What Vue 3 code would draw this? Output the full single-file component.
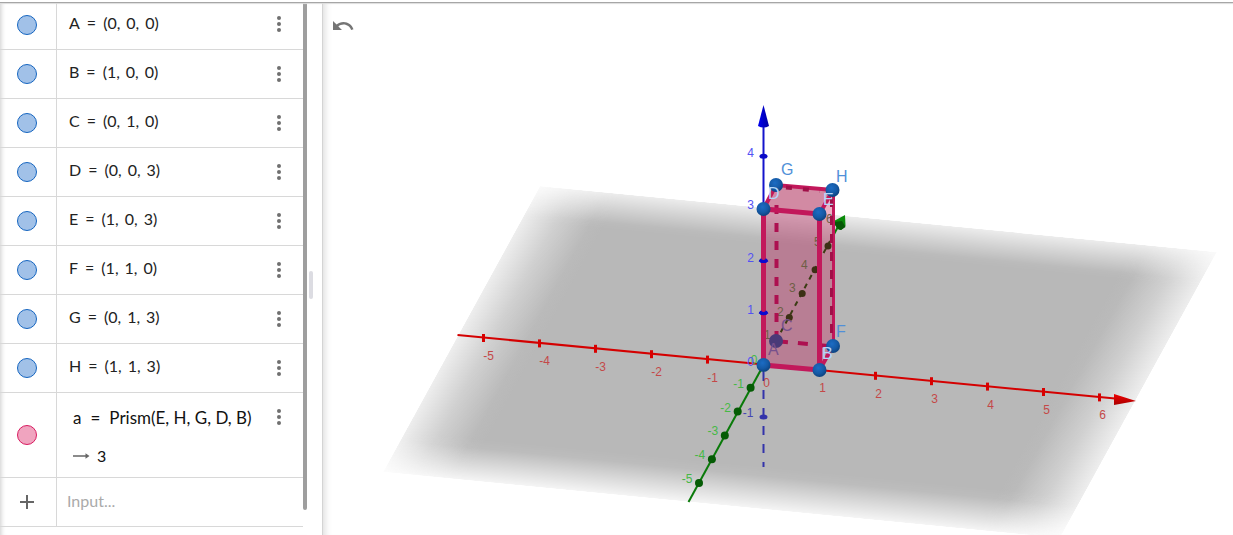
<script setup>
import { ref } from 'vue'

const points = [
  { name: 'A', value: ['(0,', '0,', '0)'] },
  { name: 'B', value: ['(1,', '0,', '0)'] },
  { name: 'C', value: ['(0,', '1,', '0)'] },
  { name: 'D', value: ['(0,', '0,', '3)'] },
  { name: 'E', value: ['(1,', '0,', '3)'] },
  { name: 'F', value: ['(1,', '1,', '0)'] },
  { name: 'G', value: ['(0,', '1,', '3)'] },
  { name: 'H', value: ['(1,', '1,', '3)'] },
]
const entry = ref('')

// Parallel projection of the scene onto the canvas.
const project = (x, y, z = 0) => [763.5 + 56 * x + 12.9 * y, 365 + 5.4 * x - 23.8 * y - 52.2 * z]

const xTicks = [-5, -4, -3, -2, -1, 2, 3, 4, 5, 6].map((n) => ({ n, p: project(n, 0) }))
const xLabels = [-5, -4, -3, -2, -1, 0, 1, 2, 3, 4, 5, 6].map((n) => ({ n, p: project(n, 0) }))
const yBack = [2, 3, 4, 5].map((n) => ({ n, p: project(0, n) }))
const yFront = [-1, -2, -3, -4, -5].map((n) => ({ n, p: project(0, n) }))
const zTicks = [1, 2, 4].map((n) => ({ n, p: project(0, 0, n) }))
const zLabels = [0, 1, 2, 3, 4].map((n) => ({ n, p: project(0, 0, n) }))
</script>

<template>
  <main class="app">
    <section class="algebra" aria-label="Algebra">
      <ul class="rows">
        <li v-for="p in points" :key="p.name" class="row">
          <div class="marble-cell">
            <button class="marble" :aria-label="'Show or hide ' + p.name"></button>
          </div>
          <div class="definition">
            <span>{{ p.name }}</span><span class="equals">=</span>
            <span v-for="(part, i) in p.value" :key="i" class="part">{{ part }}</span>
          </div>
          <button class="more" :aria-label="'Options for ' + p.name"><i></i><i></i><i></i></button>
        </li>
        <li class="row prism">
          <div class="marble-cell">
            <button class="marble pink" aria-label="Show or hide a"></button>
          </div>
          <div class="command">
            <div class="formula"><span>a</span><span>=</span><span>Prism(E, H, G, D, B)</span></div>
            <div class="result">
              <svg width="17" height="8" viewBox="0 0 17 8" aria-hidden="true">
                <path d="M0 3.200h12.500V1.200L16.500 4l-4 2.800V4.800H0z" fill="#666" />
              </svg>
              <span>3</span>
            </div>
          </div>
          <button class="more" aria-label="Options for a"><i></i><i></i><i></i></button>
        </li>
        <li class="row">
          <div class="marble-cell">
            <button class="plus" aria-label="Add">
              <svg width="14" height="14" viewBox="0 0 14 14"><path d="M7 0v14M0 7h14" stroke="#666" stroke-width="2" /></svg>
            </button>
          </div>
          <input v-model="entry" class="entry" type="text" placeholder="Input..." aria-label="Input" />
        </li>
      </ul>
      <div class="scrollbar"></div>
    </section>
    <div class="splitter"><span class="grip"></span></div>
    <section class="graphics" aria-label="3D Graphics">
      <svg class="scene" viewBox="322 0 911 535" preserveAspectRatio="xMidYMid slice">
        <defs>
          <linearGradient id="fadeU" x1="0" y1="0" x2="1" y2="0">
            <stop offset="0" stop-color="#b8b8b8" stop-opacity="0.24" />
            <stop offset="0.05" stop-color="#b8b8b8" stop-opacity="0.66" />
            <stop offset="0.1" stop-color="#b8b8b8" stop-opacity="0.97" />
            <stop offset="0.12" stop-color="#b8b8b8" />
            <stop offset="0.88" stop-color="#b8b8b8" />
            <stop offset="0.9" stop-color="#b8b8b8" stop-opacity="0.97" />
            <stop offset="0.95" stop-color="#b8b8b8" stop-opacity="0.66" />
            <stop offset="1" stop-color="#b8b8b8" stop-opacity="0.24" />
          </linearGradient>
          <linearGradient id="fadeV" x1="0" y1="0" x2="0" y2="1">
            <stop offset="0" stop-color="#fff" stop-opacity="0.26" />
            <stop offset="0.05" stop-color="#fff" stop-opacity="0.62" />
            <stop offset="0.1" stop-color="#fff" stop-opacity="0.96" />
            <stop offset="0.12" stop-color="#fff" />
            <stop offset="0.86" stop-color="#fff" />
            <stop offset="0.89" stop-color="#fff" stop-opacity="0.94" />
            <stop offset="0.95" stop-color="#fff" stop-opacity="0.5" />
            <stop offset="1" stop-color="#fff" stop-opacity="0.14" />
          </linearGradient>
          <mask id="planeMask" maskUnits="userSpaceOnUse" x="0" y="0" width="1" height="1">
            <rect width="1" height="1" fill="url(#fadeV)" />
          </mask>
          <radialGradient id="ball" cx="0.42" cy="0.35" r="0.65">
            <stop offset="0" stop-color="#1c6cc4" />
            <stop offset="0.6" stop-color="#155aa6" />
            <stop offset="1" stop-color="#0d4380" />
          </radialGradient>
          <linearGradient id="coneX" x1="0" y1="0" x2="0" y2="1">
            <stop offset="0" stop-color="#f00000" />
            <stop offset="1" stop-color="#a80000" />
          </linearGradient>
          <linearGradient id="coneZ" x1="0" y1="0" x2="1" y2="0">
            <stop offset="0" stop-color="#0000f0" />
            <stop offset="1" stop-color="#0000a0" />
          </linearGradient>
        </defs>

        <g transform="matrix(677 66 -157 286 540 186)">
          <rect width="1" height="1" fill="url(#fadeU)" mask="url(#planeMask)" />
        </g>

        <!-- y axis behind the solid -->
        <path d="M833 236L840 223" stroke="#0a7a0a" stroke-width="2" />
        <path d="M834 221L845 215L845.500 226L841 230Q836 230 834 221Z" fill="#0a8a0a" />
        <path d="M834 222L842 221L845.500 227L841 230Q836 229 834 222Z" fill="#065806" />

        <!-- x axis -->
        <path d="M457.500 335L1115 398.500" stroke="#d40000" stroke-width="2" />
        <path v-for="t in xTicks" :key="t.n" :d="`M${t.p[0]} ${t.p[1] - 4}v8`" stroke="#d80000" stroke-width="3" />
        <path d="M1114 394L1136 401L1114 405Z" fill="url(#coneX)" />

        <!-- z axis -->
        <path d="M763.500 368V467" class="z-hidden" />
        <ellipse cx="763.500" cy="417" rx="4" ry="2.500" fill="#3333aa" />
        <path d="M763.500 210V122" stroke="#1414cc" stroke-width="2" />
        <path d="M763.500 105L769 126Q763.500 129 758 126Z" fill="url(#coneZ)" />

        <!-- faces of the solid -->
        <path d="M763.500 209L819.500 214V370L763.500 365Z" fill="#b81f59" fill-opacity="0.38" />
        <path d="M819.500 214L833 190V346L819.500 370Z" fill="#c8285f" fill-opacity="0.36" />
        <path d="M763.500 209L776 185L833 190L819.500 214Z" fill="#cc7a96" fill-opacity="0.88" />

        <!-- y axis inside the solid -->
        <path d="M776 341L830 241" stroke="#3c3c14" stroke-width="2" stroke-dasharray="5 5" />
        <circle v-for="t in yBack" :key="t.n" :cx="t.p[0]" :cy="t.p[1]" r="3.500" fill="#3c3014" />
        <g class="tick-label olive">
          <text x="764" y="339">1</text>
          <text x="777" y="316">2</text>
          <text x="789" y="292">3</text>
          <text x="801" y="269">4</text>
          <text x="814" y="246">5</text>
          <text x="826" y="223">6</text>
        </g>

        <!-- hidden edges and points -->
        <g class="hidden-edges">
          <path d="M776.500 205V341" stroke-dasharray="9 9" />
          <path d="M776 341L833 346.500" stroke-dasharray="10 10" stroke-dashoffset="-2" />
        </g>
        <circle cx="776" cy="341" r="7" fill="#4a3a78" />
        <g class="scene-label violet">
          <text x="781" y="331">C</text>
          <text x="768" y="355">A</text>
        </g>

        <!-- visible edges -->
        <path d="M833.500 190V346" class="edge thin" />
        <path d="M831.500 198V340" class="hidden-side" />
        <path d="M819.500 370L833 346" class="edge" />
        <path d="M763.500 209L776 185L833 190" class="edge" />
        <path d="M819.500 214L833 190" class="edge" />
        <path d="M786 187.500L820 191" stroke="#a01048" stroke-width="4" stroke-dasharray="6 11" />
        <circle cx="776" cy="185" r="7" fill="url(#ball)" />
        <circle cx="832.500" cy="190" r="7" fill="url(#ball)" />
        <circle cx="833" cy="346" r="7" fill="url(#ball)" />
        <path d="M763.500 209V365L819.500 370V214Z" class="edge strong" />
        <ellipse v-for="t in zTicks" :key="t.n" :cx="t.p[0]" :cy="t.p[1]" rx="4" ry="2.500" fill="#0a0ac8" />
        <path d="M763.500 255V261M763.500 307V313" stroke="#c2185b" stroke-width="4" />
        <path d="M759.500 260q4 3 8 0M759.500 312q4 3 8 0" stroke="#0a0ad0" stroke-width="3" fill="none" />

        <!-- y axis in front of the solid -->
        <path d="M763.500 365L688.500 502" stroke="#0a7a0a" stroke-width="2" />
        <circle v-for="t in yFront" :key="t.n" :cx="t.p[0]" :cy="t.p[1] - 1" r="4" fill="#055c05" />
        <circle cx="763.500" cy="209" r="7" fill="url(#ball)" />
        <circle cx="819.500" cy="214" r="7" fill="url(#ball)" />
        <circle cx="763.500" cy="365" r="7" fill="url(#ball)" />
        <circle cx="819.500" cy="370" r="7" fill="url(#ball)" />

        <g class="tick-label red">
          <text v-for="t in xLabels" :key="t.n" :x="t.p[0] + (t.n < 0 ? 5 : 3)" :y="t.p[1] + 22">{{ t.n }}</text>
        </g>
        <g class="tick-label green">
          <text v-for="t in yFront" :key="t.n" :x="t.p[0] - 12" :y="t.p[1] - 1">{{ t.n }}</text>
          <text x="754" y="364">0</text>
        </g>
        <g class="tick-label blue">
          <text v-for="t in zLabels" :key="t.n" :x="t.p[0] - 13" :y="t.p[1] + 1">{{ t.n }}</text>
          <text x="748" y="417" class="dim">-1</text>
        </g>
        <g class="scene-label">
          <text x="781" y="175">G</text>
          <text x="836" y="182">H</text>
          <text x="836" y="337">F</text>
          <g class="pale">
            <text x="768" y="199">D</text>
            <text x="823" y="205">E</text>
            <text x="822" y="359">B</text>
          </g>
        </g>
      </svg>
      <button class="undo" aria-label="Undo">
        <svg width="21" height="10" viewBox="2 7 21 10">
          <path d="M12.500 8c-2.650 0-5.050.99-6.900 2.600L2 7v9h9l-3.620-3.620c1.390-1.160 3.160-1.880 5.120-1.880 3.540 0 6.550 2.310 7.600 5.500l2.370-.78C21.080 11.030 17.150 8 12.500 8z" fill="#757575" />
        </svg>
      </button>
    </section>
  </main>
</template>

<style>
body {
  margin: 0;
  background: #fff;
}
</style>

<style scoped>
.app {
  display: flex;
  height: 100vh;
  overflow: hidden;
  position: relative;
  background: #fff;
  font-family: Lato, "Liberation Sans", sans-serif;
}
.app::before {
  content: "";
  position: absolute;
  inset: 0 0 auto 0;
  height: 2px;
  border-bottom: 1px solid #a6a6a6;
  background: #fff;
  box-shadow: 0 1px 1px #ddd;
  z-index: 2;
}
button {
  border: 0;
  padding: 0;
  background: none;
  cursor: pointer;
}
.algebra {
  flex: 0 0 307px;
  display: flex;
  position: relative;
  box-shadow: inset 5px 0 5px -4px #ccc;
}
.rows {
  flex: 1;
  list-style: none;
  margin: 0;
  padding: 0;
}
.row {
  display: flex;
  height: 49px;
  box-shadow: inset 0 -1px #d8d8d8;
}
.row:first-child {
  height: 50px;
}
.marble-cell {
  width: 57px;
  border-right: 1px solid #d8d8d8;
  display: flex;
  align-items: center;
  justify-content: center;
  padding: 0 2px 1px 0;
  box-sizing: border-box;
}
.marble {
  width: 20px;
  height: 20px;
  border-radius: 50%;
  box-sizing: border-box;
  border: 1px solid #1565c0;
  background: #a1c1e8;
}
.marble.pink {
  border-color: #d81b60;
  background: #f0a4bf;
}
.definition {
  flex: 1;
  display: flex;
  padding-left: 12px;
  font-size: 16px;
  line-height: 44px;
  color: #222;
  white-space: nowrap;
}
.row:first-child .definition {
  line-height: 46px;
}
.equals {
  padding: 0 7px;
}
.part + .part {
  padding-left: 6px;
}
.more {
  width: 48px;
  height: 48px;
  display: flex;
  flex-direction: column;
  align-items: center;
  justify-content: center;
  gap: 2px;
}
.more i {
  width: 4px;
  height: 4px;
  border-radius: 50%;
  background: #707070;
}
.row.prism {
  height: 85px;
}
.command {
  flex: 1;
  padding: 6px 0 0 16px;
  font-size: 16px;
  line-height: 38px;
  color: #111;
  white-space: nowrap;
}
.formula {
  display: flex;
  gap: 9px;
  font-size: 17px;
}
.result {
  display: flex;
  align-items: center;
  gap: 7px;
}
.plus {
  display: flex;
}
.entry {
  flex: 1;
  min-width: 0;
  border: 0;
  outline: 0;
  background: none;
  padding: 0 0 4px 10px;
  font: 16px Lato, "Liberation Sans", sans-serif;
}
.entry::placeholder {
  color: #aaa;
}
.scrollbar {
  width: 4px;
  height: 510px;
  background: #9e9e9e;
  border-radius: 0 0 2px 2px;
}
.splitter {
  flex: 0 0 15px;
  display: flex;
  align-items: center;
  padding-top: 35px;
  box-sizing: border-box;
}
.grip {
  width: 4px;
  height: 28px;
  margin-left: 2px;
  border-radius: 2px;
  background: #dcdce2;
}
.graphics {
  flex: 1;
  min-width: 0;
  position: relative;
  box-shadow: inset 1px 0 #d4d4d4, inset 9px 0 7px -6px #ddd;
}
.scene {
  display: block;
  width: 100%;
  height: 100%;
}
.undo {
  position: absolute;
  left: 11px;
  top: 21px;
  display: flex;
}
.z-hidden {
  stroke: #3333aa;
  stroke-width: 2;
  stroke-dasharray: 9 9;
  stroke-dashoffset: -4;
}
.hidden-edges {
  stroke: #ad1050;
  stroke-width: 4;
}
.hidden-side {
  stroke: #a01048;
  stroke-width: 3;
  stroke-dasharray: 9 9;
}
.edge {
  fill: none;
  stroke: #c2185b;
  stroke-width: 4;
}
.thin {
  stroke-width: 3;
}
.strong {
  stroke-width: 5;
}
.tick-label {
  font: 12px "Liberation Sans", sans-serif;
  text-anchor: middle;
}
.olive {
  fill: #6e5f45;
  text-anchor: start;
}
.red {
  fill: #c44848;
}
.green {
  fill: #46b846;
}
.blue {
  fill: #5252f4;
}
.dim {
  fill: #4646b4;
}
.scene-label {
  font: 16px "Liberation Sans", sans-serif;
  fill: #5090d8;
}
.pale {
  fill: #b4d6fa;
}
.violet {
  fill: #77508c;
}
</style>
